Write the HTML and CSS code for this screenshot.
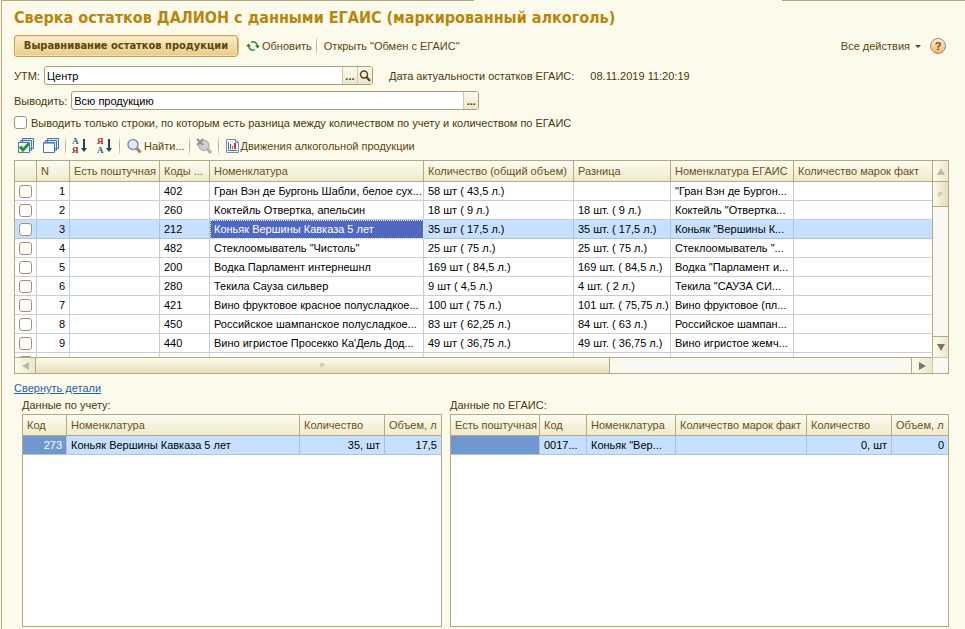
FILE: index.html
```html
<!DOCTYPE html>
<html lang="ru">
<head>
    <meta charset="UTF-8">
    <meta name="viewport" content="width=device-width, initial-scale=1.0">
    <title>Сверка остатков</title>
    <link rel="stylesheet" href="styles.css">
</head>
<body>
    <main class="form">
        <div class="tab-gap"></div>
        <h1>Сверка остатков ДАЛИОН с данными ЕГАИС (маркированный алкоголь)</h1>

        <div class="commands">
            <button class="main-button">Выравнивание остатков продукции</button>
            <span class="sep"></span>
            <button class="tool">
                <svg width="14" height="12" viewBox="0 0 14 12" fill="none" stroke="#2c8a2c" stroke-width="1.500">
                    <path d="M5 2.500Q6.500 1.500 8.500 2Q11 3 11.500 6"/><path d="M9 5.500H14L11.500 8.500z" fill="#2c7a22" stroke="none"/>
                    <path d="M9 9.500Q7.500 10.500 5.500 10Q3 9 2.500 6"/><path d="M0 6.500H5L2.500 3.500z" fill="#2c7a22" stroke="none"/>
                </svg>
                Обновить
            </button>
            <span class="sep"></span>
            <button class="tool">Открыть "Обмен с ЕГАИС"</button>
            <button class="tool all-actions">Все действия <span class="caret"></span></button>
            <button class="help" aria-label="Справка">?</button>
        </div>

        <div class="row">
            <label for="utm">УТМ:</label>
            <div class="field field-utm">
                <input id="utm" type="text" value="Центр">
                <button class="dots" aria-label="Выбрать">...</button>
                <button class="lens" aria-label="Открыть">
                    <svg width="12" height="12" viewBox="0 0 12 12" fill="none" stroke="#5c4510">
                        <circle cx="5" cy="4.500" r="3.500" stroke-width="1.500"/><path d="M7.500 7L11 11" stroke-width="2"/>
                    </svg>
                </button>
            </div>
            <span class="date-label">Дата актуальности остатков ЕГАИС:</span>
            <span>08.11.2019 11:20:19</span>
        </div>
        <div class="row">
            <label for="output">Выводить:</label>
            <div class="field field-output">
                <input id="output" type="text" value="Всю продукцию">
                <button class="dots" aria-label="Выбрать">...</button>
            </div>
        </div>
        <div class="row row-check">
            <input type="checkbox" id="diff">
            <label for="diff">Выводить только строки, по которым есть разница между количеством по учету и количеством по ЕГАИС</label>
        </div>

        <div class="toolbar">
            <button class="icon" aria-label="Отметить все">
                <svg width="16" height="16" viewBox="0 0 16 16" fill="#d5e3f2" stroke="#4a7aa8">
                    <path d="M4.500 .5H15.500V10.500H4.500zM2.500 2.500H13.500V12.500H2.500z"/><path d="M.5 4.500H11.500V14.500H.5z" fill="#eef4fb"/>
                    <path d="M2 8.500L5 12L11 5.500" fill="none" stroke="#23982a" stroke-width="3"/>
                </svg>
            </button>
            <button class="icon" aria-label="Снять отметки">
                <svg width="16" height="16" viewBox="0 0 16 16" fill="#d5e3f2" stroke="#4a7aa8">
                    <path d="M4.500 .5H15.500V10.500H4.500zM2.500 2.500H13.500V12.500H2.500z"/><path d="M.5 4.500H11.500V14.500H.5z" fill="#f6f9fd"/>
                    <path d="M1 5.500H11" stroke="#8fb0d2"/>
                </svg>
            </button>
            <span class="sep"></span>
            <button class="icon" aria-label="Сортировать по возрастанию">
                <span class="letters"><b class="blue">А</b><b class="red">Я</b></span>
                <svg width="6" height="14" viewBox="0 0 6 14" fill="#1f4560"><path d="M2 0H4V9H6L3 13 0 9H2z"/></svg>
            </button>
            <button class="icon" aria-label="Сортировать по убыванию">
                <span class="letters"><b class="red">Я</b><b class="blue">А</b></span>
                <svg width="6" height="14" viewBox="0 0 6 14" fill="#1f4560"><path d="M2 0H4V9H6L3 13 0 9H2z"/></svg>
            </button>
            <span class="sep"></span>
            <button class="tool">
                <svg width="15" height="16" viewBox="0 0 15 16" fill="none">
                    <path d="M9.500 10L13.500 14.500" stroke="#b5805a" stroke-width="3"/><circle cx="6" cy="6.500" r="5" fill="#d9ecfb" stroke="#8593a6" stroke-width="1.500"/>
                    <path d="M3 6Q3.500 3.500 6 3.500" stroke="#fff"/>
                </svg>
                Найти...
            </button>
            <span class="sep"></span>
            <button class="icon" aria-label="Отменить поиск">
                <svg width="16" height="16" viewBox="0 0 16 16" fill="none">
                    <path d="M11 10.500L15 15" stroke="#b9aca4" stroke-width="3"/><circle cx="8" cy="7.500" r="5" fill="#cfd0d4" stroke="#b3b3b8" stroke-width="1.500"/>
                    <path d="M1 1L7 7M7 1L1 7" stroke="#98918d" stroke-width="2"/>
                </svg>
            </button>
            <span class="sep"></span>
            <button class="tool">
                <svg width="13" height="14" viewBox="0 0 13 14">
                    <path d="M.5 .5H9.500L12.500 3.500V13.500H.5z" fill="#f4f8fd" stroke="#6f93b5"/><path d="M9.500 .5V3.500H12.500" fill="none" stroke="#6f93b5"/>
                    <path d="M2.500 3V11.500H11" fill="none" stroke="#55789a"/><path d="M4 5H5V10H4z" fill="#d33"/><path d="M6 7H7V10H6z" fill="#3a9a3a"/><path d="M8 4H10V10H8z" fill="#d33"/>
                </svg>
                Движения алкогольной продукции
            </button>
        </div>

        <div class="stock">
            <div class="stock-rows">
                <table class="grid">
                    <colgroup>
                        <col class="w-check"><col class="w-n"><col class="w-piece"><col class="w-code"><col class="w-name">
                        <col class="w-qty"><col class="w-diff"><col class="w-egais"><col>
                    </colgroup>
                    <thead>
                        <tr><th></th><th>N</th><th>Есть поштучная</th><th>Коды ...</th><th>Номенклатура</th><th>Количество (общий объем)</th><th>Разница</th><th>Номенклатура ЕГАИС</th><th>Количество марок факт</th></tr>
                    </thead>
                    <tbody>
                        <tr><td><input type="checkbox" aria-label="Строка 1"></td><td class="num">1</td><td></td><td>402</td><td>Гран Вэн де Бургонь Шабли, белое сух...</td><td>58 шт ( 43,5 л.)</td><td></td><td>"Гран Вэн де Бургон...</td><td></td></tr>
                        <tr><td><input type="checkbox" aria-label="Строка 2"></td><td class="num">2</td><td></td><td>260</td><td>Коктейль Отвертка, апельсин</td><td>18 шт ( 9 л.)</td><td>18 шт. ( 9 л.)</td><td>Коктейль "Отвертка...</td><td></td></tr>
                        <tr class="selected"><td><input type="checkbox" aria-label="Строка 3"></td><td class="num">3</td><td></td><td>212</td><td class="current">Коньяк Вершины Кавказа 5 лет</td><td>35 шт ( 17,5 л.)</td><td>35 шт. ( 17,5 л.)</td><td>Коньяк "Вершины К...</td><td></td></tr>
                        <tr><td><input type="checkbox" aria-label="Строка 4"></td><td class="num">4</td><td></td><td>482</td><td>Стеклоомыватель "Чистоль"</td><td>25 шт ( 75 л.)</td><td>25 шт. ( 75 л.)</td><td>Стеклоомыватель "...</td><td></td></tr>
                        <tr><td><input type="checkbox" aria-label="Строка 5"></td><td class="num">5</td><td></td><td>200</td><td>Водка Парламент интернешнл</td><td>169 шт ( 84,5 л.)</td><td>169 шт. ( 84,5 л.)</td><td>Водка "Парламент и...</td><td></td></tr>
                        <tr><td><input type="checkbox" aria-label="Строка 6"></td><td class="num">6</td><td></td><td>280</td><td>Текила Сауза сильвер</td><td>9 шт ( 4,5 л.)</td><td>4 шт. ( 2 л.)</td><td>Текила "САУЗА СИ...</td><td></td></tr>
                        <tr><td><input type="checkbox" aria-label="Строка 7"></td><td class="num">7</td><td></td><td>421</td><td>Вино фруктовое красное полусладкое...</td><td>100 шт ( 75 л.)</td><td>101 шт. ( 75,75 л.)</td><td>Вино фруктовое (пл...</td><td></td></tr>
                        <tr><td><input type="checkbox" aria-label="Строка 8"></td><td class="num">8</td><td></td><td>450</td><td>Российское шампанское полусладкое...</td><td>83 шт ( 62,25 л.)</td><td>84 шт. ( 63 л.)</td><td>Российское шампан...</td><td></td></tr>
                        <tr><td><input type="checkbox" aria-label="Строка 9"></td><td class="num">9</td><td></td><td>440</td><td>Вино игристое Просекко Ка'Дель Дод...</td><td>49 шт ( 36,75 л.)</td><td>49 шт. ( 36,75 л.)</td><td>Вино игристое жемч...</td><td></td></tr>
                        <tr><td><input type="checkbox" aria-label="Строка 10"></td><td></td><td></td><td></td><td></td><td></td><td></td><td></td><td></td></tr>
                    </tbody>
                </table>
            </div>
            <div class="vscroll">
                <button class="vbtn up" aria-label="Вверх"></button>
                <div class="vthumb"><i></i></div>
                <button class="vbtn down" aria-label="Вниз"></button>
            </div>
            <div class="hscroll">
                <button class="hbtn left" aria-label="Влево"></button>
                <div class="hthumb"><i></i></div>
                <div class="htrack"></div>
                <button class="hbtn right" aria-label="Вправо"></button>
            </div>
            <div class="corner"></div>
        </div>

        <a class="collapse" href="#details">Свернуть детали</a>

        <div class="details" id="details">
            <section class="panel panel-account">
                <h2>Данные по учету:</h2>
                <div class="panel-body">
                    <table class="grid">
                        <colgroup><col class="w-acode"><col><col class="w-aqty"><col class="w-vol"></colgroup>
                        <thead>
                            <tr><th>Код</th><th>Номенклатура</th><th>Количество</th><th>Объем, л</th></tr>
                        </thead>
                        <tbody>
                            <tr class="selected"><td class="num key">273</td><td>Коньяк Вершины Кавказа 5 лет</td><td class="num">35, шт</td><td class="num">17,5</td></tr>
                        </tbody>
                    </table>
                </div>
            </section>
            <section class="panel panel-egais">
                <h2>Данные по ЕГАИС:</h2>
                <div class="panel-body">
                    <table class="grid">
                        <colgroup><col class="w-epiece"><col class="w-ecode"><col class="w-ename"><col><col class="w-aqty"><col class="w-vol"></colgroup>
                        <thead>
                            <tr><th>Есть поштучная</th><th>Код</th><th>Номенклатура</th><th>Количество марок факт</th><th>Количество</th><th>Объем, л</th></tr>
                        </thead>
                        <tbody>
                            <tr class="selected"><td class="key"></td><td>0017...</td><td>Коньяк "Вер...</td><td></td><td class="num">0, шт</td><td class="num">0</td></tr>
                        </tbody>
                    </table>
                </div>
            </section>
        </div>
    </main>
</body>
</html>
```

FILE: styles.css
```css
* {
    box-sizing: border-box;
}

body {
    margin: 0;
    background-color: #fcfaeb;
    font-family: "Liberation Sans", Arial, sans-serif;
    font-size: 11px;
    line-height: 14px;
    color: #4a390f;
}

button,
input {
    margin: 0;
    padding: 0;
    border: 0;
    background: none;
    font: inherit;
    color: inherit;
}

/* Form frame */
.form {
    position: relative;
    display: flex;
    flex-direction: column;
    min-height: 100vh;
    margin-left: 1px;
    padding: 6px 16px 2px 12px;
    border-left: 1px solid #b3aa82;
    border-top: 1px solid #b3aa82;
}

.tab-gap {
    position: absolute;
    top: -1px;
    left: 49%;
    width: 32%;
    height: 1px;
    background-color: #fcfaeb;
}

h1 {
    margin: 0 0 7px;
    font-family: "DejaVu Sans Condensed", "DejaVu Sans", Tahoma, sans-serif;
    font-size: 16px;
    line-height: 21px;
    color: #b8860b;
    white-space: nowrap;
}

/* Commands */
.commands,
.toolbar {
    display: flex;
    align-items: center;
    color: #5c4510;
}

.commands {
    height: 22px;
    margin-bottom: 9px;
}

.main-button {
    min-width: 224px;
    height: 22px;
    padding: 0 6px;
    border: 1px solid #c9a24a;
    border-radius: 3px;
    background: linear-gradient(#fbeecb, #e9cb85);
    box-shadow: inset 0 0 0 1px #f5dfae;
    font-family: "DejaVu Sans Condensed", Verdana, sans-serif;
    font-weight: bold;
    white-space: nowrap;
}

.sep {
    width: 1px;
    height: 18px;
    margin: 0 3px 0 0;
    background: linear-gradient(#ece7cf, #b3aa82, #ece7cf);
}

.tool {
    display: flex;
    align-items: center;
    gap: 2px;
    padding: 0 4px;
    white-space: nowrap;
}

.all-actions {
    margin-left: auto;
    gap: 5px;
}

.caret {
    border: 3px solid transparent;
    border-top-color: #5c4510;
    border-bottom: 0;
}

.help {
    width: 16px;
    height: 16px;
    margin: 0 3px 0 5px;
    border: 1px solid #a58d62;
    border-radius: 50%;
    background: linear-gradient(#fdf0dc, #f3b765);
    font-weight: bold;
    color: #7a4a1c;
}

/* Fields */
.row {
    display: flex;
    align-items: center;
    height: 19px;
    margin-bottom: 6px;
    white-space: nowrap;
}

.row label {
    margin-right: 4px;
}

.field {
    display: flex;
    height: 19px;
    overflow: hidden;
    border: 1px solid #aaa076;
    border-radius: 3px;
    background-color: #fff;
}

.field-utm {
    width: 329px;
}

.field-output {
    width: 408px;
}

.field input {
    flex: 1;
    min-width: 0;
    padding-left: 2px;
    color: #000;
}

.field button {
    display: flex;
    align-items: center;
    justify-content: center;
    width: 15px;
    border-left: 1px solid #cfc9ac;
    background: linear-gradient(#fcfbee, #ece7cb);
}

.dots {
    font-weight: bold;
}

.date-label {
    margin: 0 16px;
}

.row-check {
    height: 13px;
    margin: 0 0 8px;
}

input[type="checkbox"] {
    appearance: none;
    display: block;
    flex: none;
    width: 13px;
    height: 13px;
    border: 1px solid #a0946a;
    border-radius: 3px;
    background-color: #fff;
}

.row-check label {
    margin-left: 4px;
}

.toolbar {
    height: 18px;
    margin-bottom: 5px;
    padding-left: 1px;
}

.icon {
    display: flex;
    align-items: center;
    gap: 2px;
    min-width: 16px;
    height: 18px;
    margin: 0 6px 0 3px;
}

.letters b {
    display: block;
    font-family: "Liberation Serif", serif;
    font-size: 9px;
    line-height: 9px;
}

.blue {
    color: #24608f;
}

.red {
    color: #a02828;
}

/* Tables */
.grid {
    width: 100%;
    table-layout: fixed;
    border-collapse: separate;
    border-spacing: 0;
    color: #000;
}

.grid th,
.grid td {
    height: 19px;
    padding: 0 4px;
    border-right: 1px solid #c8ced6;
    border-bottom: 1px solid #c8ced6;
    overflow: hidden;
    white-space: nowrap;
    text-align: left;
}

.grid th {
    height: 21px;
    border-color: #b3aa82;
    background: linear-gradient(#fcfbf0, #f0eacf);
    font-weight: normal;
    color: #6b5217;
}

.grid th:last-child,
.grid td:last-child {
    border-right: 0;
}

.grid .num {
    text-align: right;
}

.grid .selected td {
    border-color: #a9c4e6;
    background-color: #c8e0ff;
}

.grid .selected .current {
    outline: 1px dotted #fff;
    outline-offset: -1px;
    background-color: #5068c0;
    color: #fff;
}

.grid .selected .key {
    background-color: #6f98cf;
    color: #fff;
}

.w-check { width: 22px; }
.w-n { width: 33px; }
.w-piece { width: 90px; }
.w-code { width: 50px; }
.w-name { width: 214px; }
.w-qty { width: 150px; }
.w-diff { width: 97px; }
.w-egais { width: 123px; }
.w-acode { width: 44px; }
.w-aqty { width: 85px; }
.w-vol { width: 56px; }
.w-epiece { width: 89px; }
.w-ecode { width: 47px; }
.w-ename { width: 89px; }

/* Stock list with its scrollbars */
.stock {
    display: grid;
    grid-template-columns: 1fr 16px;
    grid-template-rows: 196px 16px;
    border: 1px solid #b3aa82;
    background-color: #fff;
}

.stock-rows {
    overflow: hidden;
}

.vscroll {
    display: flex;
    flex-direction: column;
    border-left: 1px solid #b3aa82;
    background-color: #f9f8f2;
}

.vbtn,
.hbtn {
    display: flex;
    align-items: center;
    justify-content: center;
    background: linear-gradient(90deg, #fcfbee, #ece7cb);
}

.vbtn {
    height: 21px;
}

.up {
    border-bottom: 1px solid #b3aa82;
}

.down {
    margin-top: auto;
    border-top: 1px solid #b3aa82;
}

.vthumb,
.hthumb {
    display: flex;
    align-items: center;
    justify-content: center;
}

.vthumb {
    height: 25px;
    border-bottom: 1px solid #b3aa82;
    background: linear-gradient(90deg, #fcfbee, #e4deba);
}

.vthumb i,
.hthumb i {
    width: 5px;
    height: 5px;
    border-radius: 50%;
    background: linear-gradient(135deg, #b9b390, #f5f2e0);
}

.hscroll {
    display: flex;
    border-top: 1px solid #b3aa82;
    background-color: #f9f8f2;
}

.hthumb {
    flex: 19;
    border-right: 1px solid #b3aa82;
    background: linear-gradient(#fcfbee, #e4deba);
}

.htrack {
    flex: 10;
}

.hbtn {
    width: 21px;
}

.left {
    border-right: 1px solid #b3aa82;
}

.right {
    border-left: 1px solid #b3aa82;
}

.vbtn::before,
.hbtn::before {
    content: "";
    border: 4px solid transparent;
}

.up::before {
    border-bottom: 7px solid #bdbaa8;
    border-top: 0;
}

.down::before {
    border-top: 7px solid #77756a;
    border-bottom: 0;
}

.left::before {
    border-right: 7px solid #bdbaa8;
    border-left: 0;
}

.right::before {
    border-left: 7px solid #77756a;
    border-right: 0;
}

.corner {
    border-top: 1px solid #cfc9ac;
    border-left: 1px solid #cfc9ac;
    background-color: #f9f8f2;
}

/* Details */
.collapse {
    align-self: flex-start;
    margin: 7px 0 3px;
    color: #1f5bb5;
}

.details {
    display: flex;
    flex: 1;
    gap: 8px;
    padding-left: 8px;
}

.panel {
    display: flex;
    flex-direction: column;
    min-width: 0;
}

.panel-account {
    flex: 420 1 0;
}

.panel-egais {
    flex: 499 1 0;
}

h2 {
    margin: 0 0 2px;
    font-size: 11px;
    font-weight: normal;
    line-height: 14px;
}

.panel-body {
    flex: 1;
    border: 1px solid #b3aa82;
    background-color: #fff;
}
```
